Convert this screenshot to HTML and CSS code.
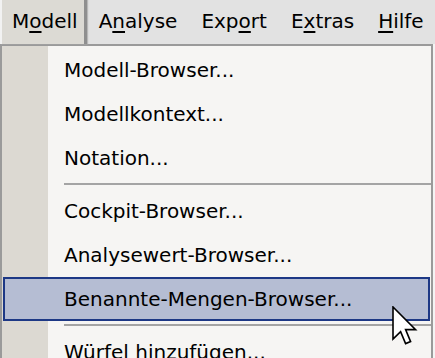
FILE: index.html
```html
<!DOCTYPE html>
<html lang="de">
<head>
    <meta charset="UTF-8">
    <title>Modell-Menü</title>
    <link rel="stylesheet" href="styles.css">
</head>
<body>
    <div class="menubar">
        <div class="top-item open">M<u>o</u>dell</div>
        <div class="top-item">A<u>n</u>alyse</div>
        <div class="top-item">Exp<u>o</u>rt</div>
        <div class="top-item">E<u>x</u>tras</div>
        <div class="top-item"><u>H</u>ilfe</div>
    </div>

    <div class="menu">
        <div class="item">Modell-Browser...</div>
        <div class="item">Modellkontext...</div>
        <div class="item">Notation...</div>
        <div class="sep"></div>
        <div class="item">Cockpit-Browser...</div>
        <div class="item">Analysewert-Browser...</div>
        <div class="item active">Benannte-Mengen-Browser...</div>
        <div class="sep"></div>
        <div class="item">Würfel hinzufügen...</div>
    </div>

    <!-- mouse pointer over the highlighted entry -->
    <svg class="cursor" width="26" height="42" viewBox="0 0 13 21">
        <path d="M0.5 0.5 L0.5 16.5 L4.3 12.8 L6.8 18.8 L9.3 17.8 L6.8 11.8 L11.8 11.8 Z"
              fill="#fff" stroke="#000" stroke-width="0.8" stroke-linejoin="miter"/>
    </svg>
</body>
</html>
```

FILE: styles.css
```css
body {
    margin: 0;
    width: 435px;
    height: 358px;
    overflow: hidden;
    background: #f4f4f4;
    font-family: "DejaVu Sans", sans-serif;
    font-size: 20px;
    color: #000;
    position: relative;
}
u {
    text-decoration-thickness: 2px;
    text-underline-offset: 3px;
}
.menubar {
    display: flex;
    height: 44px;
    background: #e2e2e2;
}
.top-item {
    display: flex;
    align-items: center;
    padding: 0 12px 2px 12px;
}
.top-item.open {
    background: #dcdad4;
    border-left: 2px solid #f2f2f2;
    padding-left: 10px;
    padding-right: 6px;
    border-right: 3px solid #8f8f8f;
    box-shadow: 1px 0 1px #b8b8b8;
    margin-right: 0;
}
.menu {
    width: 429px;
    height: 320px;
    border: 2px solid #9a9a9a;
    border-bottom: none;
    padding-top: 2px;
    background: linear-gradient(to right, #dcd9d2 46px, #f6f5f3 46px);
}
.item {
    height: 44px;
    display: flex;
    align-items: center;
    padding-left: 62px;
    white-space: nowrap;
}
.item.active {
    margin: 0 1px;
    padding-left: 59px;
    height: 40px;
    border: 2px solid #1d3885;
    background: #b5bdd3;
}
.sep {
    height: 9px;
    margin-left: 62px;
    background: linear-gradient(to bottom, transparent 3px, #a4a4a4 3px, #a4a4a4 5px, transparent 5px);
}
.cursor {
    position: absolute;
    left: 392px;
    top: 306px;
}
```
